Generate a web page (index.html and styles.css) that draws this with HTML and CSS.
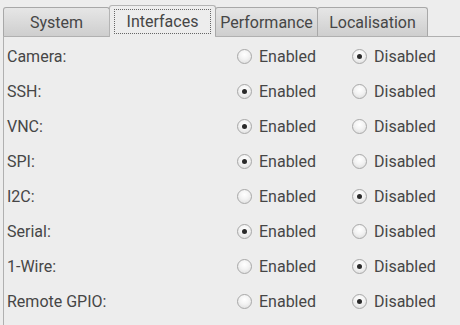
FILE: index.html
```html
<!DOCTYPE html>
<html>
<head>
<meta charset="utf-8">
<link rel="stylesheet" href="styles.css">
</head>
<body>
<div class="tabs">
  <div class="tab tab-system">System</div>
  <div class="tab tab-active tab-interfaces"><span class="focus">Interfaces</span></div>
  <div class="tab tab-performance">Performance</div>
  <div class="tab tab-localisation">Localisation</div>
</div>
<div class="panel">
  <div class="row"><span class="label">Camera:</span><span class="opt"><i class="radio"></i>Enabled</span><span class="opt"><i class="radio on"></i>Disabled</span></div>
  <div class="row"><span class="label">SSH:</span><span class="opt"><i class="radio on"></i>Enabled</span><span class="opt"><i class="radio"></i>Disabled</span></div>
  <div class="row"><span class="label">VNC:</span><span class="opt"><i class="radio on"></i>Enabled</span><span class="opt"><i class="radio"></i>Disabled</span></div>
  <div class="row"><span class="label">SPI:</span><span class="opt"><i class="radio on"></i>Enabled</span><span class="opt"><i class="radio"></i>Disabled</span></div>
  <div class="row"><span class="label">I2C:</span><span class="opt"><i class="radio"></i>Enabled</span><span class="opt"><i class="radio on"></i>Disabled</span></div>
  <div class="row"><span class="label">Serial:</span><span class="opt"><i class="radio on"></i>Enabled</span><span class="opt"><i class="radio"></i>Disabled</span></div>
  <div class="row"><span class="label">1-Wire:</span><span class="opt"><i class="radio"></i>Enabled</span><span class="opt"><i class="radio on"></i>Disabled</span></div>
  <div class="row"><span class="label">Remote GPIO:</span><span class="opt"><i class="radio"></i>Enabled</span><span class="opt"><i class="radio on"></i>Disabled</span></div>
</div>
</body>
</html>
```
FILE: styles.css
```css
html, body {
  margin: 0;
  padding: 0;
  background: #ededed;
  font-family: Roboto, "Liberation Sans", sans-serif;
  font-size: 16px;
  color: #464646;
  overflow: hidden;
}
.tabs {
  display: flex;
  align-items: flex-end;
  padding-left: 3px;
  padding-top: 5px;
  height: 31px;
  position: relative;
  z-index: 1;
}
.tab {
  box-sizing: border-box;
  height: 29px;
  border: 1px solid #a8a8a8;
  border-bottom: none;
  border-radius: 3px 3px 0 0;
  background: linear-gradient(#e6e6e6, #cecece);
  display: flex;
  align-items: center;
  justify-content: center;
  padding-top: 1px;
  color: #464646;
}
.tab + .tab { margin-left: -1px; }
.tab-active {
  height: 32px;
  margin-bottom: -1px;
  background: #ededed;
  border-color: #b4b4b4;
  padding-top: 0;
}
.tab-system { width: 107px; }
.tab-interfaces { width: 107px; }
.tab-performance { width: 103px; }
.tab-localisation { width: 111px; }
.focus {
  border: 1px dotted #666;
  padding: 3px 12px;
  line-height: 17px;
}
.panel {
  margin-left: 3px;
  margin-right: -4px;
  height: 286px;
  border: 1px solid #b0b0b0;
  padding-top: 2px;
  padding-left: 3px;
}
.row {
  display: grid;
  grid-template-columns: 230px 115px auto;
  height: 35px;
  align-items: center;
}
.opt {
  display: flex;
  align-items: center;
}
.radio {
  box-sizing: border-box;
  width: 15px;
  height: 15px;
  border-radius: 50%;
  border: 1px solid #a8a8a8;
  background: radial-gradient(circle at 50% 35%, #ffffff 0%, #f3f3f3 45%, #d9d9d9 100%);
  margin-right: 7px;
  display: flex;
  align-items: center;
  justify-content: center;
}
.radio.on::after {
  content: "";
  width: 5px;
  height: 5px;
  border-radius: 50%;
  background: #2a2a2a;
}
```
